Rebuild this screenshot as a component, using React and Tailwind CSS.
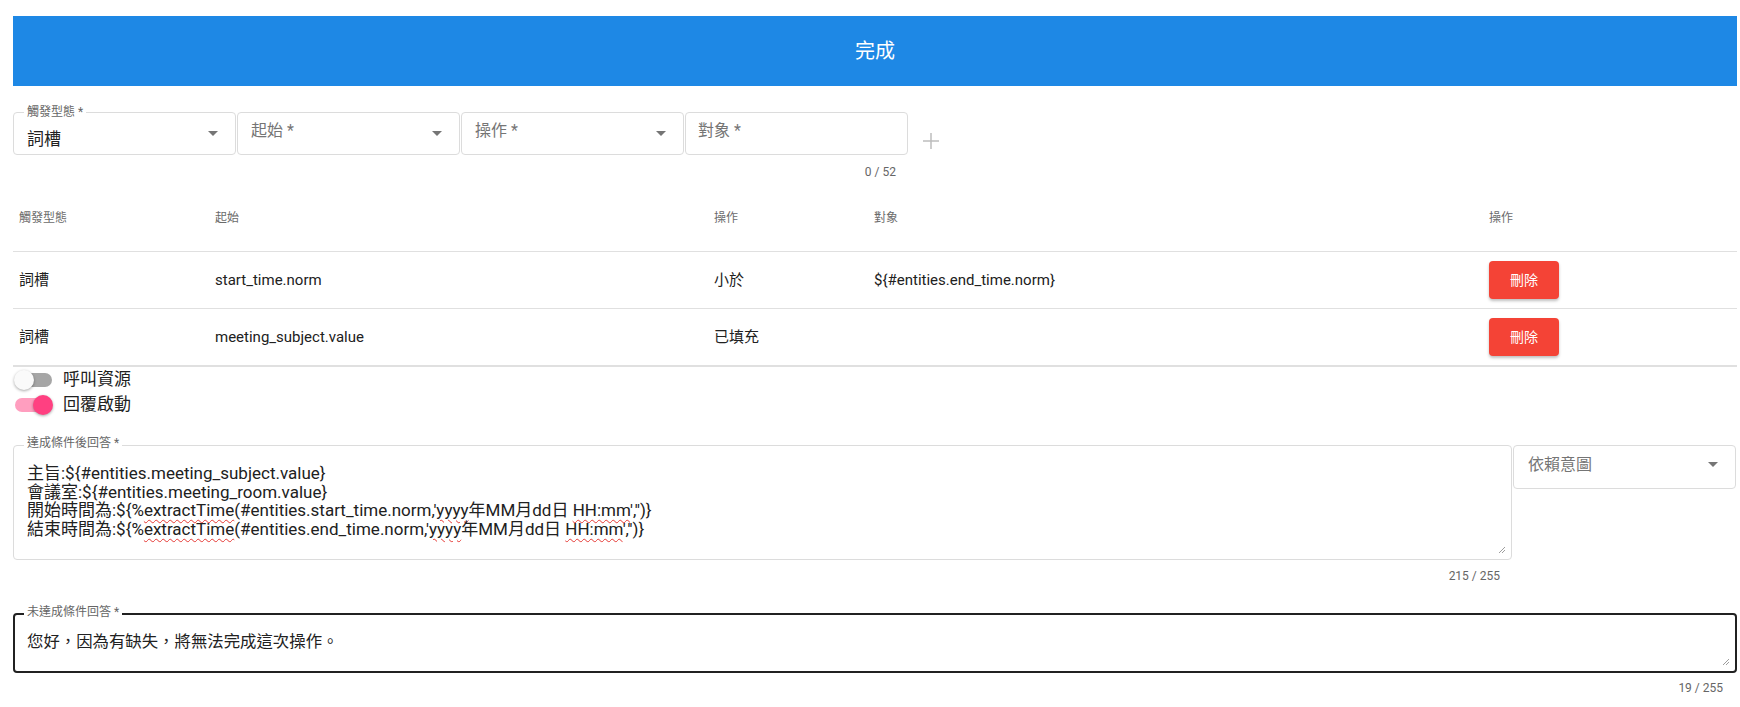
import React from "react";

const font = "font-['Roboto','Noto_Sans_CJK_TC',sans-serif]";

function Arrow() {
  return (
    <svg width="10" height="5" viewBox="0 0 10 5" className="flex-shrink-0">
      <path d="M0 0L5 5L10 0Z" fill="#757575" />
    </svg>
  );
}

function Grip() {
  return (
    <svg width="8" height="8" viewBox="0 0 8 8" className="absolute right-[5px] bottom-[5px]">
      <path d="M1 7L7 1M4 7L7 4" stroke="#9e9e9e" strokeWidth="1" />
    </svg>
  );
}

function SelectBox({ label, value, placeholder }) {
  return (
    <div className="relative w-[223px] h-[43px] border border-[#dcdcdc] rounded-[4px] flex items-center justify-between pl-[13px] pr-[17px]">
      {label && (
        <span className="absolute -top-[9px] left-[10px] px-[3px] bg-white text-[12px] leading-[16px] text-[#666]">
          {label}
        </span>
      )}
      {value ? (
        <span className="self-start pt-[16px] text-[17px] leading-[20px] text-[#212121]">{value}</span>
      ) : (
        <span className="self-start pt-[8px] text-[16px] leading-[20px] text-[#757575]">{placeholder}</span>
      )}
      <Arrow />
    </div>
  );
}

function Switch({ on }) {
  return (
    <div className="relative w-[39px] h-[20px]">
      <div className={`absolute left-[1px] right-[1px] top-[3px] h-[14px] rounded-full ${on ? "bg-[#ff9ebf]" : "bg-[#a6a6a6]"}`} />
      <div
        className={`absolute top-0 w-[20px] h-[20px] rounded-full shadow-[0_1px_3px_rgba(0,0,0,0.35)] ${on ? "right-0 bg-[#ff4081]" : "left-0 bg-[#fafafa]"}`}
      />
    </div>
  );
}

const cols = "grid grid-cols-[196px_499px_160px_615px_1fr] items-center";

function Wavy({ children }) {
  return <span className="underline decoration-wavy decoration-[#e53935] decoration-1 underline-offset-[3px]">{children}</span>;
}

export default function App() {
  const rows = [
    { type: "詞槽", start: "start_time.norm", op: "小於", target: "${#entities.end_time.norm}" },
    { type: "詞槽", start: "meeting_subject.value", op: "已填充", target: "" },
  ];

  return (
    <div className={`${font} bg-white w-[1740px] h-[707px] pl-[13px] pr-[3px] pt-[16px] overflow-hidden`}>
      {/* Top bar */}
      <div className="h-[70px] bg-[#1e88e5] flex items-center justify-center text-white text-[20px]">
        完成
      </div>

      {/* Condition inputs */}
      <div className="mt-[26px] flex items-start gap-[1px]">
        <SelectBox label="觸發型態 *" value="詞槽" />
        <SelectBox placeholder="起始 *" />
        <SelectBox placeholder="操作 *" />
        <div className="flex flex-col">
          <div className="w-[223px] h-[43px] border border-[#dcdcdc] rounded-[4px] pl-[12px] pt-[8px] text-[16px] leading-[20px] text-[#757575]">
            對象 *
          </div>
          <div className="mt-[10px] pr-[12px] text-right text-[12px] leading-[14px] text-[#666]">0 / 52</div>
        </div>
        <svg width="16" height="16" viewBox="0 0 16 16" className="ml-[14px] mt-[21px]">
          <path d="M8 0V16M0 8H16" stroke="#bdbdbd" strokeWidth="1.5" />
        </svg>
      </div>

      {/* Table */}
      <div className="mt-[2px] border-b-2 border-[#e0e0e0]">
        <div className={`${cols} h-[70px] pt-[4px] text-[12px] text-[#6b6b6b]`}>
          <div className="pl-[6px]">觸發型態</div>
          <div className="pl-[6px]">起始</div>
          <div className="pl-[6px]">操作</div>
          <div className="pl-[6px]">對象</div>
          <div className="pl-[6px]">操作</div>
        </div>
        {rows.map((r, i) => (
          <div key={i} className={`${cols} h-[57px] border-t border-[#e0e0e0] text-[15px] text-[#212121]`}>
            <div className="pl-[6px]">{r.type}</div>
            <div className="pl-[6px]">{r.start}</div>
            <div className="pl-[6px]">{r.op}</div>
            <div className="pl-[6px]">{r.target}</div>
            <div className="pl-[6px]">
              <button className="w-[70px] h-[38px] rounded-[4px] bg-[#f44336] text-white text-[14px] shadow-[0_2px_3px_rgba(0,0,0,0.25)]">
                刪除
              </button>
            </div>
          </div>
        ))}
      </div>

      {/* Switches */}
      <div className="flex flex-col">
        <div className="h-[25px] flex items-center pl-[1px]">
          <Switch on={false} />
          <span className="ml-[10px] text-[17px] text-[#212121]">呼叫資源</span>
        </div>
        <div className="h-[25px] flex items-center pl-[1px]">
          <Switch on />
          <span className="ml-[10px] text-[17px] text-[#212121]">回覆啟動</span>
        </div>
      </div>

      {/* Reply when satisfied */}
      <div className="mt-[28px] flex items-start gap-[1px]">
        <div className="flex flex-col w-[1499px]">
          <div className="relative h-[115px] border border-[#dcdcdc] rounded-[4px] pl-[13px] pt-[18px] text-[17px] leading-[18.5px] text-[#212121] whitespace-pre">
            <span className="absolute -top-[11px] left-[10px] px-[3px] bg-white text-[12px] leading-[16px] text-[#666]">
              達成條件後回答 *
            </span>
            <div>主旨:${"{"}#entities.meeting_subject.value{"}"}</div>
            <div>會議室:${"{"}#entities.meeting_room.value{"}"}</div>
            <div>
              開始時間為:${"{"}%<Wavy>extractTime</Wavy>(#entities.start_time.norm,'<Wavy>yyyy</Wavy>年MM月dd日 <Wavy>HH:mm</Wavy>',''){"}"}
            </div>
            <div>
              結束時間為:${"{"}%<Wavy>extractTime</Wavy>(#entities.end_time.norm,'<Wavy>yyyy</Wavy>年MM月dd日 <Wavy>HH:mm</Wavy>',''){"}"}
            </div>
            <Grip />
          </div>
          <div className="mt-[9px] pr-[12px] text-right text-[12px] leading-[14px] text-[#666]">215 / 255</div>
        </div>
        <div className="w-[223px] h-[44px] border border-[#dcdcdc] rounded-[4px] flex items-start justify-between pl-[14px] pr-[17px]">
          <span className="pt-[9px] text-[16px] leading-[20px] text-[#757575]">依賴意圖</span>
          <div className="pt-[16px]">
            <Arrow />
          </div>
        </div>
      </div>

      {/* Reply when not satisfied */}
      <div className="mt-[30px]">
        <div className="relative h-[60px] border-2 border-[#212121] rounded-[4px] pl-[12px] pt-[18px] text-[16.4px] leading-[18px] text-[#212121]">
          <span className="absolute -top-[11px] left-[9px] px-[3px] bg-white text-[12px] leading-[16px] text-[#666]">
            未達成條件回答 *
          </span>
          您好，因為有缺失，將無法完成這次操作。
          <Grip />
        </div>
        <div className="mt-[8px] pr-[14px] text-right text-[12px] leading-[14px] text-[#666]">19 / 255</div>
      </div>
    </div>
  );
}
